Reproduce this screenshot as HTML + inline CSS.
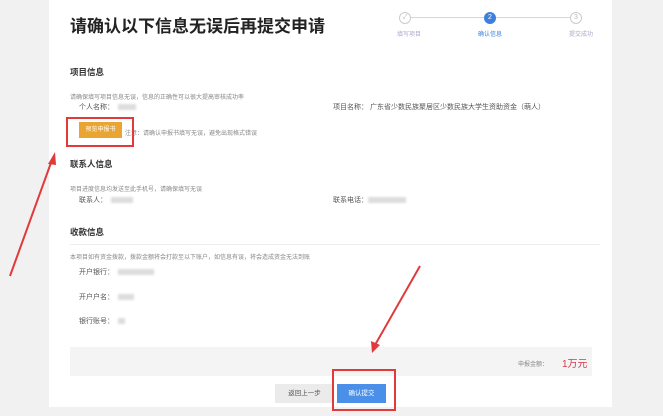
<!DOCTYPE html><html><head><meta charset="utf-8"><style>
body{margin:0;width:663px;height:416px;background:#f1f1f1;font-family:"Liberation Sans","Noto Sans CJK SC",sans-serif;position:relative;overflow:hidden}
.a{position:absolute;white-space:nowrap}
.s{font-size:6px;color:#888}
.l{font-size:7px;color:#555}
.h{font-size:8.5px;color:#333;font-weight:bold}
.b{background:#ddd;filter:blur(1px);height:6px}
</style></head><body>
<div class="a" style="left:49px;top:0;width:563px;height:407px;background:#fff"></div>
<div class="a" style="left:70px;top:12px;font-size:17px;font-weight:bold;color:#222">请确认以下信息无误后再提交申请</div>
<div class="a" style="left:410px;top:17px;width:74px;height:1px;background:#cfd8e6"></div>
<div class="a" style="left:495px;top:17px;width:76px;height:1px;background:#cfd8e6"></div>
<div class="a" style="left:399px;top:12px;width:10px;height:10px;border:1px solid #ccc;border-radius:50%;font-size:7px;color:#bbb;text-align:center;line-height:10px">✓</div>
<div class="a" style="left:484px;top:12px;width:12px;height:12px;background:#3d7fdc;border-radius:50%;font-size:7px;color:#fff;text-align:center;line-height:12px">2</div>
<div class="a" style="left:570px;top:12px;width:10px;height:10px;border:1px solid #ccc;border-radius:50%;font-size:7px;color:#bbb;text-align:center;line-height:10px">3</div>
<div class="a s" style="left:397px;top:29px;color:#aac">填写项目</div>
<div class="a s" style="left:478px;top:29px;color:#3d7fdc">确认信息</div>
<div class="a s" style="left:569px;top:29px;color:#aac">提交成功</div>

<div class="a h" style="left:70px;top:66px">项目信息</div>
<div class="a s" style="left:70px;top:92px">请确保填写项目信息无误，信息的正确性可以很大提高审核成功率</div>
<div class="a l" style="left:79px;top:102px">个人名称：</div><div class="a b" style="left:118px;top:104px;width:18px"></div>
<div class="a l" style="left:333px;top:102px">项目名称：</div>
<div class="a l" style="left:370px;top:102px">广东省少数民族聚居区少数民族大学生资助资金（萌人）</div>
<div class="a" style="left:79px;top:122px;width:43px;height:16px;background:#e9a431;color:#fff;font-size:6px;text-align:center;line-height:16px">预览申报书</div>
<div class="a s" style="left:125px;top:128px">注意：请确认申报书填写无误，避免出现格式错误</div>
<div class="a" style="left:66px;top:117px;width:64px;height:26px;border:2px solid #e03a3a"></div>

<div class="a h" style="left:70px;top:158px">联系人信息</div>
<div class="a s" style="left:70px;top:184px">项目进度信息均发送至此手机号，请确保填写无误</div>
<div class="a l" style="left:79px;top:195px">联系人：</div><div class="a b" style="left:111px;top:197px;width:22px"></div>
<div class="a l" style="left:333px;top:195px">联系电话：</div><div class="a b" style="left:368px;top:197px;width:38px"></div>

<div class="a h" style="left:70px;top:226px">收款信息</div>
<div class="a" style="left:70px;top:244px;width:530px;height:1px;background:#eee"></div>
<div class="a s" style="left:70px;top:252px">本项目如有资金拨款，拨款金额将会打款至以下账户，如信息有误，将会造成资金无法到账</div>
<div class="a l" style="left:79px;top:267px">开户银行：</div><div class="a b" style="left:118px;top:269px;width:36px"></div>
<div class="a l" style="left:79px;top:292px">开户户名：</div><div class="a b" style="left:118px;top:294px;width:16px"></div>
<div class="a l" style="left:79px;top:316px">银行账号：</div><div class="a b" style="left:118px;top:318px;width:7px"></div>

<div class="a" style="left:70px;top:347px;width:522px;height:29px;background:#f4f4f4"></div>
<div class="a s" style="left:518px;top:359px">申报金额：</div>
<div class="a" style="left:562px;top:355px;font-size:10px;color:#d33a4a">1万元</div>
<div class="a" style="left:275px;top:384px;width:59px;height:19px;background:#ebebeb;font-size:6.5px;color:#555;text-align:center;line-height:19px">返回上一步</div>
<div class="a" style="left:337px;top:384px;width:49px;height:19px;background:#4a8fe8;font-size:6.5px;color:#fff;text-align:center;line-height:19px">确认提交</div>
<div class="a" style="left:332px;top:369px;width:60px;height:38px;border:2px solid #e03a3a"></div>

<svg class="a" style="left:0;top:0" width="663" height="416">
<line x1="10" y1="276" x2="52" y2="160" stroke="#e03a3a" stroke-width="2"/>
<polygon points="55,152 48,164 56,165" fill="#e03a3a"/>
<line x1="420" y1="266" x2="375" y2="345" stroke="#e03a3a" stroke-width="2"/>
<polygon points="372,353 371,341 380,345" fill="#e03a3a"/>
</svg>
</body></html>
